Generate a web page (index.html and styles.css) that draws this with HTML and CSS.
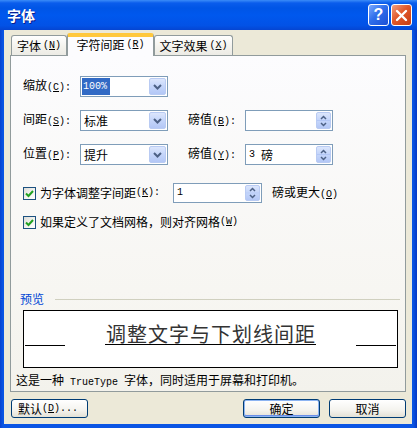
FILE: index.html
```html
<!DOCTYPE html>
<html lang="zh-CN">
<head>
<meta charset="utf-8">
<title>字体</title>
<link rel="stylesheet" href="styles.css">
</head>
<body>
<div class="window">
  <div class="titlebar">
    <span class="title">字体</span>
    <div class="tbtns">
      <span class="tbtn help">?</span>
      <span class="tbtn close"><svg width="13" height="13" viewBox="0 0 13 13"><path d="M2 2 L11 11 M11 2 L2 11" stroke="#fff" stroke-width="2.4" stroke-linecap="round"/></svg></span>
    </div>
  </div>
  <div class="client">
    <div class="tabs">
      <div class="tab t1">字体<span class="m">(<u>N</u>)</span></div>
      <div class="tab t2 active">字符间距<span class="m">(<u>R</u>)</span></div>
      <div class="tab t3">文字效果<span class="m">(<u>X</u>)</span></div>
    </div>
    <div class="panel">
      <div class="grid">
        <span class="lbl r1">缩放<span class="m">(<u>C</u>):</span></span>
        <div class="combo r1c"><span class="ctext"><span class="sel m">100%</span></span><span class="dd"><svg width="9" height="6" viewBox="0 0 9 6"><path d="M1 1 L4.5 4.5 L8 1" fill="none" stroke="#4D6185" stroke-width="2"/></svg></span></div>
        <span class="lbl r2">间距<span class="m">(<u>S</u>):</span></span>
        <div class="combo r2c"><span class="ctext">标准</span><span class="dd"><svg width="9" height="6" viewBox="0 0 9 6"><path d="M1 1 L4.5 4.5 L8 1" fill="none" stroke="#4D6185" stroke-width="2"/></svg></span></div>
        <span class="lbl r2b">磅值<span class="m">(<u>B</u>):</span></span>
        <div class="spin r2d"><span class="ctext"></span><span class="sb"><svg width="7" height="12" viewBox="0 0 7 12"><path d="M1 4 L3.5 1.5 L6 4 M1 8 L3.5 10.5 L6 8" fill="none" stroke="#4D6185" stroke-width="1.5"/></svg></span></div>
        <span class="lbl r3">位置<span class="m">(<u>P</u>):</span></span>
        <div class="combo r3c"><span class="ctext">提升</span><span class="dd"><svg width="9" height="6" viewBox="0 0 9 6"><path d="M1 1 L4.5 4.5 L8 1" fill="none" stroke="#4D6185" stroke-width="2"/></svg></span></div>
        <span class="lbl r3b">磅值<span class="m">(<u>Y</u>):</span></span>
        <div class="spin r3d"><span class="ctext"><span class="m num">3</span>磅</span><span class="sb"><svg width="7" height="12" viewBox="0 0 7 12"><path d="M1 4 L3.5 1.5 L6 4 M1 8 L3.5 10.5 L6 8" fill="none" stroke="#4D6185" stroke-width="1.5"/></svg></span></div>
      </div>

      <div class="checkrow c1">
        <span class="cklabel"><span class="ck"><svg width="11" height="11" viewBox="0 0 11 11"><path d="M2 5.5 L4.5 8 L9 3" fill="none" stroke="#21A121" stroke-width="2"/></svg></span>为字体调整字间距<span class="m">(<u>K</u>):</span></span>
        <div class="spin kern"><span class="ctext"><span class="m">1</span></span><span class="sb"><svg width="7" height="12" viewBox="0 0 7 12"><path d="M1 4 L3.5 1.5 L6 4 M1 8 L3.5 10.5 L6 8" fill="none" stroke="#4D6185" stroke-width="1.5"/></svg></span></div>
        <span class="after">磅或更大<span class="m">(<u>O</u>)</span></span>
      </div>
      <div class="checkrow c2">
        <span class="cklabel"><span class="ck"><svg width="11" height="11" viewBox="0 0 11 11"><path d="M2 5.5 L4.5 8 L9 3" fill="none" stroke="#21A121" stroke-width="2"/></svg></span>如果定义了文档网格，则对齐网格<span class="m">(<u>W</u>)</span></span>
      </div>

      <div class="legend"><span class="ltext">预览</span><span class="lline"></span></div>
      <div class="preview">
        <span class="pl"></span>
        <div class="ptext"><span class="sample">调整文字与下划线间距</span></div>
        <span class="pl"></span>
      </div>
      <div class="footer">这是一种<span class="m"> TrueType </span>字体，同时适用于屏幕和打印机。</div>
    </div>
    <div class="buttons">
      <span class="btn">默认<span class="m">(<u>D</u>)...</span></span>
      <span class="btn ok">确定</span>
      <span class="btn cancel">取消</span>
    </div>
  </div>
</div>
</body>
</html>
```

FILE: styles.css
```css
* { box-sizing: border-box; }
html, body { margin: 0; padding: 0; }
body {
  width: 417px;
  height: 428px;
  overflow: hidden;
  font: 12px/14px "Noto Sans CJK SC", sans-serif;
  color: #000;
  background: #0B4FD8;
}
.m { font-family: "Liberation Mono", monospace; font-size: 10px; }
.num { margin-right: 6px; }
u { text-decoration: underline; }

.window {
  width: 417px;
  height: 428px;
  display: flex;
  flex-direction: column;
  background: linear-gradient(90deg, #0842CF 0, #0A55E4 3px, #0A55E4 calc(100% - 4px), #0638C4 100%);
}

.titlebar {
  height: 30px;
  flex: none;
  display: flex;
  align-items: center;
  justify-content: space-between;
  padding: 0 5px 0 7px;
  background: linear-gradient(#3B8CF8 0, #0A5DEC 3px, #0055E6 8px, #0058EE 50%, #0252E6 85%, #0545D2 100%);
}
.title {
  color: #fff;
  font-weight: bold;
  font-size: 14px;
  text-shadow: 1px 1px 0 #0A1E8C;
}
.tbtns { display: flex; gap: 2px; }
.tbtn {
  width: 21px;
  height: 22px;
  border: 1px solid #fff;
  border-radius: 3px;
  display: flex;
  align-items: center;
  justify-content: center;
}
.help {
  background: linear-gradient(135deg, #7AA9FF, #2F6EEB 45%, #1C50D6);
  color: #fff;
  font: bold 16px "Liberation Sans", sans-serif;
}
.close {
  background: linear-gradient(135deg, #F2A081, #E1582A 45%, #C63D15);
}

.client {
  flex: 1;
  margin: 0 5px 4px 4px;
  background: #ECE9D8;
  display: flex;
  flex-direction: column;
  padding: 3px 6px 5px 6px;
}

.tabs {
  height: 22px;
  display: flex;
  align-items: flex-end;
  padding-left: 1px;
}
.tab {
  height: 20px;
  border: 1px solid #919B9C;
  border-bottom: none;
  border-radius: 3px 3px 0 0;
  background: linear-gradient(#FFFFFF, #F3F2EC 60%, #ECEBE5);
  display: flex;
  align-items: center;
  justify-content: center;
  padding-top: 1px;
  gap: 2px;
}
.t1 { width: 56px; }
.t2 { width: 87px; }
.t3 { width: 79px; }
.tab.active {
  height: 23px;
  margin-bottom: -1px;
  position: relative;
  z-index: 2;
  background: #FCFCFE;
  border-top: 3px solid #FFC83C;
  box-shadow: inset 0 1px 0 #FFC83C;
  padding-top: 0;
  padding-bottom: 2px;
}

.panel {
  height: 337px;
  flex: none;
  border: 1px solid #919B9C;
  background: linear-gradient(#FCFCFE, #F7F6F2 70%, #F3F2EC);
  padding-top: 20px;
}

.grid {
  margin-left: 12px;
  display: grid;
  grid-template-columns: 57px 88px 20px 57px 88px;
  grid-template-rows: 21px 21px 21px;
  row-gap: 13px;
}
.lbl { align-self: center; white-space: nowrap; }
.r1 { grid-row: 1; grid-column: 1; }
.r1c { grid-row: 1; grid-column: 2; }
.r2 { grid-row: 2; grid-column: 1; }
.r2c { grid-row: 2; grid-column: 2; }
.r2b { grid-row: 2; grid-column: 4; }
.r2d { grid-row: 2; grid-column: 5; }
.r3 { grid-row: 3; grid-column: 1; }
.r3c { grid-row: 3; grid-column: 2; }
.r3b { grid-row: 3; grid-column: 4; }
.r3d { grid-row: 3; grid-column: 5; }

.combo, .spin {
  height: 21px;
  border: 1px solid #7F9DB9;
  background: #fff;
  display: flex;
  align-items: stretch;
}
.ctext {
  flex: 1;
  display: flex;
  align-items: center;
  padding-left: 3px;
}
.sel {
  background: #316AC5;
  color: #fff;
  padding: 1px 3px 1px 1px;
  margin-left: -2px;
  line-height: 15px;
}
.dd {
  width: 17px;
  margin: 1px;
  border: 1px solid #B9CBF3;
  border-radius: 2px;
  background: linear-gradient(#DCE6FC, #C4D5FA 50%, #B3C7F6);
  display: flex;
  align-items: center;
  justify-content: center;
}
.sb {
  width: 15px;
  margin: 1px;
  border: 1px solid #B9CBF3;
  border-radius: 2px;
  background: linear-gradient(#DCE6FC, #C4D5FA 45%, #B3C7F6 50%, #C4D5FA 55%, #B3C7F6);
  display: flex;
  align-items: center;
  justify-content: center;
}

.checkrow {
  margin-left: 12px;
  height: 20px;
  display: flex;
  align-items: center;
}
.c1 { margin-top: 18px; }
.c2 { margin-top: 9px; }
.cklabel {
  display: flex;
  align-items: center;
  white-space: nowrap;
}
.c1 .cklabel { width: 150px; }
.ck {
  width: 13px;
  height: 13px;
  border: 1px solid #1C5180;
  background: linear-gradient(135deg, #DCDCD7, #F5F5F2 60%, #FFFFFF);
  display: flex;
  align-items: center;
  justify-content: center;
  margin-right: 4px;
}
.kern { width: 89px; height: 20px; }
.after { margin-left: 10px; }

.legend {
  margin-top: 60px;
  height: 14px;
  padding-left: 9px;
  display: flex;
  align-items: center;
}
.ltext { color: #0046D5; }
.lline {
  flex: 1;
  height: 1px;
  background: #D0D0BF;
  margin: 1px 5px 0 11px;
}

.preview {
  margin: 4px 0 0 12px;
  width: 375px;
  height: 58px;
  border: 1px solid #000;
  background: #fff;
  display: flex;
  align-items: flex-start;
  padding: 0 1px;
}
.pl {
  width: 40px;
  height: 1px;
  background: #000;
  margin-top: 34px;
}
.ptext {
  flex: 1;
  text-align: center;
  padding-top: 13px;
}
.sample {
  display: inline-block;
  font-size: 20px;
  line-height: 20px;
  letter-spacing: 1px;
  color: #333;
  border-bottom: 1px solid #000;
  padding-left: 1px;
}

.footer {
  margin: 5px 0 0 5px;
  line-height: 14px;
  white-space: nowrap;
}

.buttons {
  margin-top: 7px;
  display: flex;
  padding-left: 1px;
}
.btn {
  width: 77px;
  height: 19px;
  border: 1px solid #003C74;
  border-radius: 3px;
  background: linear-gradient(#FFFFFF, #F4F3EE 60%, #E3E1D6);
  display: flex;
  align-items: center;
  justify-content: center;
  white-space: nowrap;
}
.btn:first-child { justify-content: flex-start; padding-left: 6px; }
.ok {
  margin-left: auto;
  box-shadow: inset 0 0 0 1px #8CB4F2, inset 0 -1px 0 1px #6A8EE8;
}
.cancel { margin-left: 9px; }
```
